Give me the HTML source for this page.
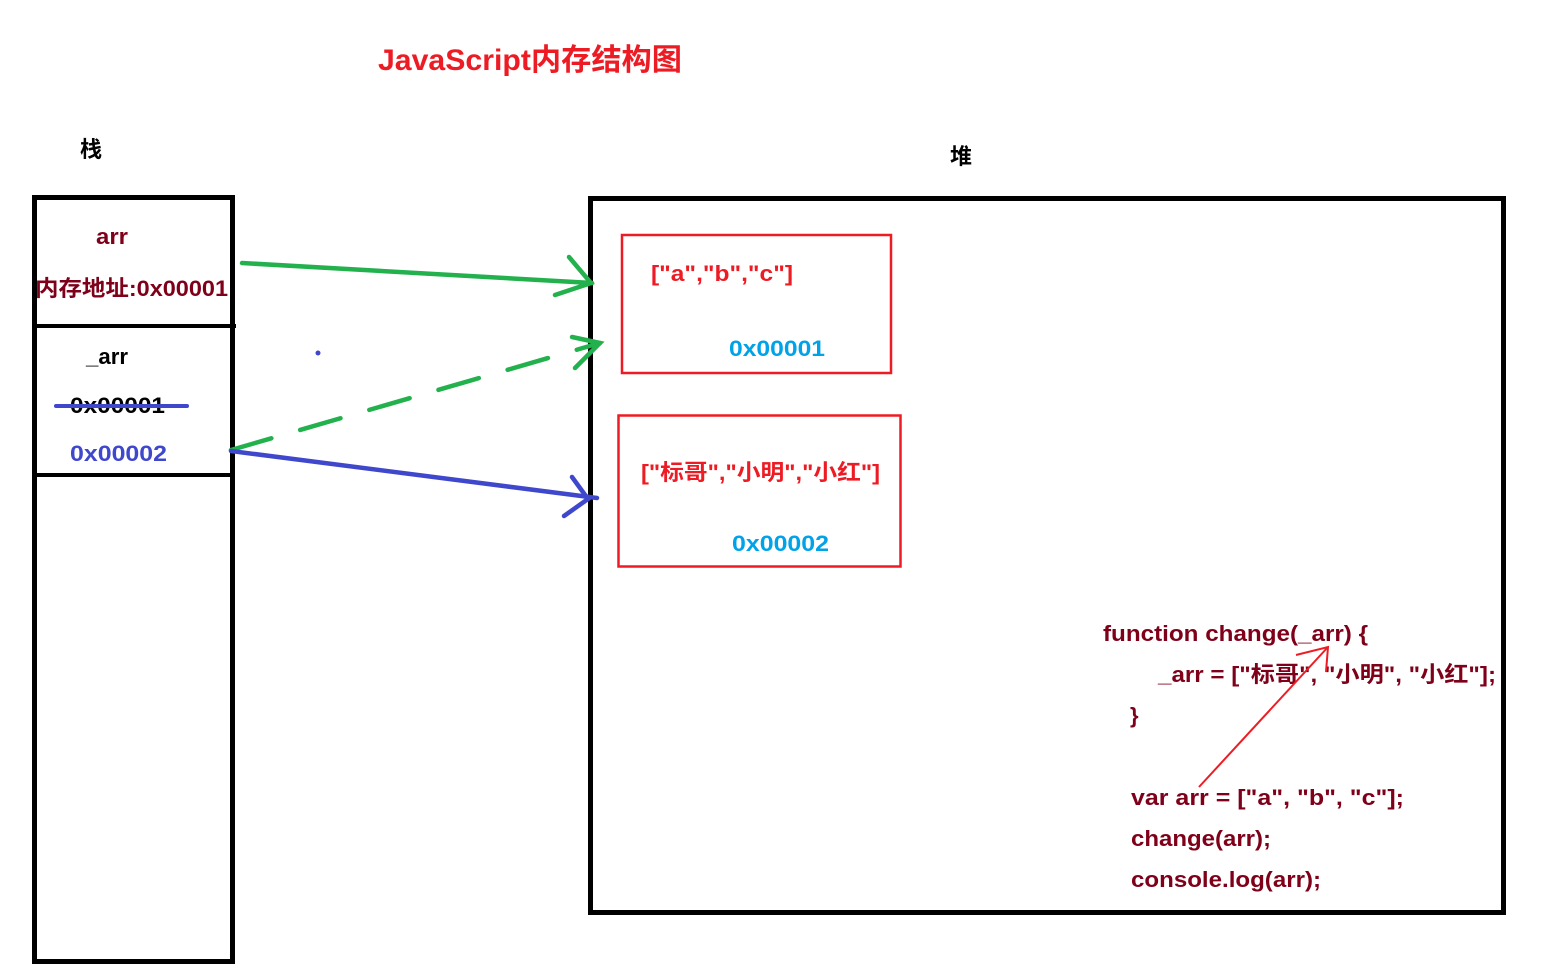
<!DOCTYPE html>
<html><head><meta charset="utf-8"><style>
html,body{margin:0;padding:0;background:#fff;width:1548px;height:975px;overflow:hidden}
svg{display:block}
text{font-family:"Liberation Sans","Noto Sans CJK SC",sans-serif;font-weight:bold}
</style></head><body>
<svg width="1548" height="975" viewBox="0 0 1548 975">
<text x="378" y="70" font-size="30" fill="#ed1c24" textLength="304" lengthAdjust="spacingAndGlyphs">JavaScript内存结构图</text>
<text x="80" y="157" font-size="22" fill="#000">栈</text>
<text x="950" y="164" font-size="22" fill="#000">堆</text>
<!-- stack -->
<rect x="34.5" y="197.5" width="198" height="764" fill="none" stroke="#000" stroke-width="5"/>
<line x1="34" y1="326" x2="236" y2="326" stroke="#000" stroke-width="4"/>
<line x1="34" y1="475" x2="230" y2="475" stroke="#000" stroke-width="4"/>
<text x="96" y="244" font-size="22" fill="#7f0019" textLength="32" lengthAdjust="spacingAndGlyphs">arr</text>
<text x="35" y="296" font-size="22" fill="#7f0019" textLength="193" lengthAdjust="spacingAndGlyphs">内存地址:0x00001</text>
<text x="86" y="364" font-size="22" fill="#000" textLength="42" lengthAdjust="spacingAndGlyphs">_arr</text>
<text x="70" y="413" font-size="22" fill="#000" textLength="95" lengthAdjust="spacingAndGlyphs">0x00001</text>
<line x1="56" y1="406" x2="187" y2="406" stroke="#3f48cc" stroke-width="4" stroke-linecap="round"/>
<text x="70" y="461" font-size="22" fill="#3f48cc" textLength="97" lengthAdjust="spacingAndGlyphs">0x00002</text>
<circle cx="318" cy="353" r="2.5" fill="#3f48cc"/>
<!-- heap -->
<rect x="590.5" y="198.5" width="913" height="714" fill="none" stroke="#000" stroke-width="5"/>
<rect x="622" y="235" width="269" height="138" fill="none" stroke="#ed1c24" stroke-width="2.5"/>
<text x="651" y="281" font-size="22" fill="#ed1c24" textLength="142" lengthAdjust="spacingAndGlyphs">["a","b","c"]</text>
<text x="729" y="356" font-size="22" fill="#00a2e8" textLength="96" lengthAdjust="spacingAndGlyphs">0x00001</text>
<rect x="618.5" y="415.5" width="282" height="151" fill="none" stroke="#ed1c24" stroke-width="2.5"/>
<text x="641" y="480" font-size="22" fill="#ed1c24" textLength="239" lengthAdjust="spacingAndGlyphs">["标哥","小明","小红"]</text>
<text x="732" y="551" font-size="22" fill="#00a2e8" textLength="97" lengthAdjust="spacingAndGlyphs">0x00002</text>
<!-- arrows -->
<g stroke="#22b14c" stroke-width="4.5" fill="none" stroke-linecap="round">
<line x1="242" y1="263" x2="592" y2="283"/>
<polyline points="569,257 591,283 555,295"/>
<line x1="231" y1="450" x2="600" y2="343" stroke-dasharray="42,30"/>
<polyline points="572,337 600,343 575,368"/>
</g>
<g stroke="#3f48cc" stroke-width="4.5" fill="none" stroke-linecap="round">
<line x1="231" y1="451" x2="597" y2="498"/>
<polyline points="572,477 588,499 564,516"/>
</g>
<!-- code -->
<g font-size="22" fill="#7f0019">
<text x="1103" y="641" textLength="265" lengthAdjust="spacingAndGlyphs">function change(_arr) {</text>
<text x="1158" y="682" textLength="338" lengthAdjust="spacingAndGlyphs">_arr = ["标哥", "小明", "小红"];</text>
<text x="1130" y="723">}</text>
<text x="1131" y="805" textLength="273" lengthAdjust="spacingAndGlyphs">var arr = ["a", "b", "c"];</text>
<text x="1131" y="846" textLength="140" lengthAdjust="spacingAndGlyphs">change(arr);</text>
<text x="1131" y="887" textLength="190" lengthAdjust="spacingAndGlyphs">console.log(arr);</text>
</g>
<g stroke="#ed1c24" stroke-width="2" fill="none">
<line x1="1199" y1="787" x2="1328" y2="647"/>
<polyline points="1296,655 1328,647 1326,672"/>
</g>
</svg>
</body></html>
